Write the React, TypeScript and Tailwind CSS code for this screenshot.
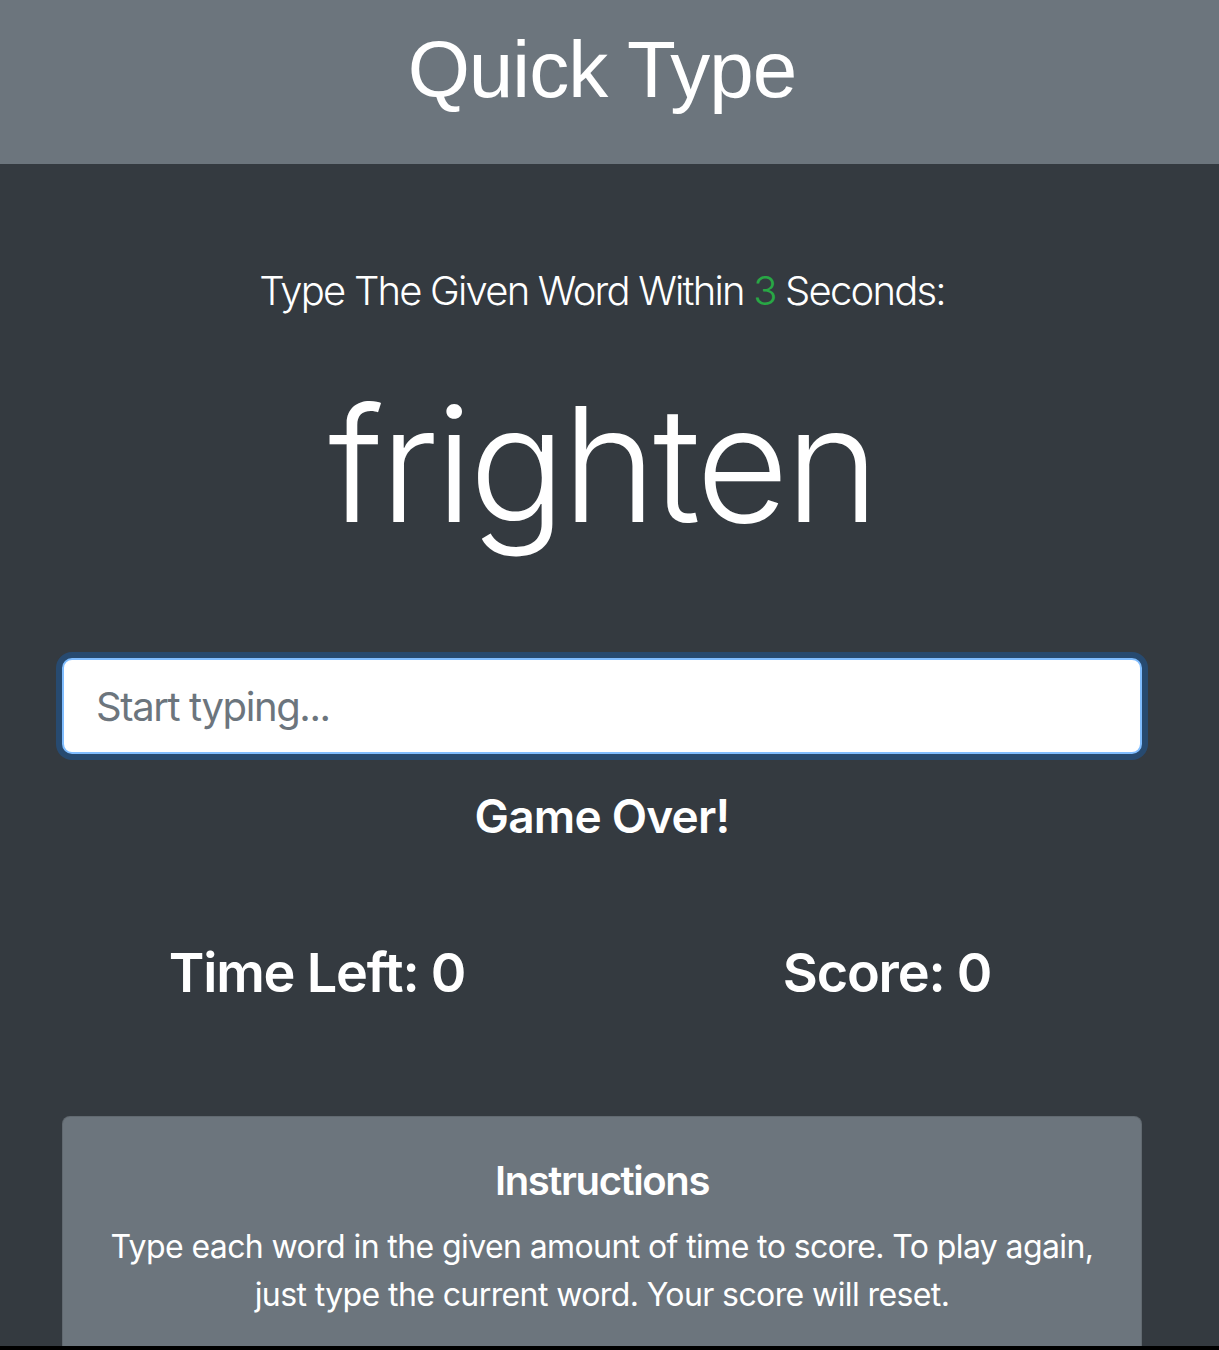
const sans = "font-['Inter','Noto_Sans',sans-serif]";

function Header() {
  return (
    <header className="h-[164px] w-full bg-[#6c757d]">
      <div className="w-[1204px] pt-[22px] text-center">
        <h1 className="font-['Liberation_Sans',Arial,sans-serif] text-[80px] leading-[96px] font-normal tracking-[-1px] text-white">
          Quick Type
        </h1>
      </div>
    </header>
  );
}

function Stat({ label, value }: { label: string; value: number }) {
  return (
    <div className="flex-1 text-center">
      <h3 className="text-[54px] leading-[67px] font-semibold tracking-[-1.2px] text-white">
        {label}: {value}
      </h3>
    </div>
  );
}

export default function App() {
  return (
    <div className={`flex h-[1350px] flex-col overflow-hidden bg-[#343a40] ${sans}`}>
      <div className="flex-1 overflow-hidden">
        <Header />
        <main className="ml-[62px] w-[1080px] pt-[97px] text-center text-white">
          <p className="text-[40px] leading-[60px] font-light tracking-[-1.8px]">
            Type The Given Word Within <span className="text-[#28a745]">3</span> Seconds:
          </p>
          <h2 className="mt-[47px] text-[160px] leading-[192px] font-light tracking-[-3.5px]">frighten</h2>
          <input
            type="text"
            placeholder="Start typing..."
            className="mt-[98px] block h-[96px] w-full rounded-[10px] border-2 border-[#80bdff] bg-white px-[32px] text-[40px] tracking-[-1.4px] text-[#495057] shadow-[0_0_0_6px_rgba(0,123,255,0.25)] outline-none placeholder:text-[#6c757d]"
          />
          <h4 className="mt-[33px] text-[46px] leading-[58px] font-semibold tracking-[-0.8px]">Game Over!</h4>
          <div className="-mx-[30px] mt-[94px] flex">
            <Stat label="Time Left" value={0} />
            <Stat label="Score" value={0} />
          </div>
          <section className="mt-[110px] rounded-[8px] border border-black/10 bg-[#6c757d] p-[40px]">
            <h5 className="text-[40px] leading-[48px] font-semibold tracking-[-1.4px]">Instructions</h5>
            <p className="mt-[18px] text-[32px] leading-[48px] tracking-[-0.6px]">
              Type each word in the given amount of time to score. To play again, just type the current word. Your
              score will reset.
            </p>
          </section>
        </main>
      </div>
      <div className="h-[4px] bg-black" />
    </div>
  );
}
